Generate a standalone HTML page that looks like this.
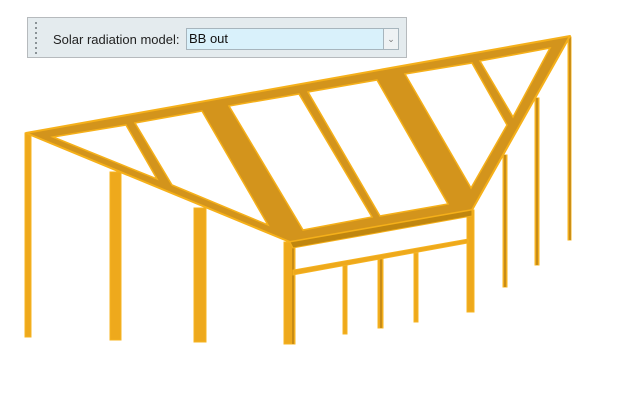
<!DOCTYPE html>
<html><head><meta charset="utf-8"><style>
html,body{margin:0;padding:0;background:#fff;width:639px;height:417px;overflow:hidden;font-family:"Liberation Sans",sans-serif}
.tb{position:absolute;left:27px;top:17px;width:380px;height:41px;background:#e4ebee;border:1px solid #b6babd;box-sizing:border-box}
.grip{position:absolute;left:7px;top:4px;width:2px;height:32px;background:repeating-linear-gradient(#8a9296 0 2px,transparent 2px 5px)}
.lbl{position:absolute;left:25px;top:14px;font-size:13px;color:#222}
.sel{position:absolute;left:158px;top:10px;width:198px;height:22px;background:#d9f1fb;border:1px solid #a7b5bd;box-sizing:border-box;font-size:13px;color:#111;padding:2px 0 0 2px}
.btn{position:absolute;left:355px;top:10px;width:16px;height:22px;border:1px solid #a7b5bd;box-sizing:border-box;background:#eef2f4;color:#777;font-size:9px;text-align:center;line-height:20px}
svg{position:absolute;left:0;top:0}
</style></head><body>
<svg width="639" height="417" viewBox="0 0 639 417">
<g fill="#eea91c" stroke="#f7b420" stroke-width="1">
<rect x="25" y="133" width="6" height="204"/>
<rect x="110" y="172" width="11" height="168"/>
<rect x="194" y="208" width="12" height="134"/>
<rect x="284" y="242" width="11" height="102"/>
<rect x="467" y="210" width="7" height="102"/>
<rect x="343" y="265" width="4" height="69"/>
<rect x="378" y="259" width="5" height="69"/>
<rect x="414" y="253" width="4" height="69"/>
<rect x="503" y="155" width="4" height="132"/>
<rect x="535" y="98" width="4" height="167"/>
<rect x="568" y="37" width="3" height="203"/>
</g>
<g stroke="#b07812" stroke-width="1.2">
<line x1="293" y1="244" x2="293" y2="344"/>
<line x1="381" y1="259" x2="381" y2="328"/>
<line x1="505" y1="155" x2="505" y2="287"/>
<line x1="537" y1="98" x2="537" y2="265"/>
<line x1="570" y1="37" x2="570" y2="240"/>
</g>
<polygon points="293,270 468,239 468,243 293,275" fill="#eea91c" stroke="#f7b420" stroke-width="0.8"/>
<polygon points="26,133 570,36 472,210 290,242" fill="#d3941c" stroke="#f5b01a" stroke-width="2" stroke-linejoin="round"/>
<polygon points="290,242 472,210 472,216 293,248" fill="#c0860f" stroke="#f5b01a" stroke-width="1"/>
<g fill="#fff" stroke="#f5b01a" stroke-width="1.5">
<polygon points="53,137 126,125 157,179"/>
<polygon points="135,123 202,111 268,225 172,185"/>
<polygon points="229,106 299,94 372,217 303,230"/>
<polygon points="308,92 377,80 448,204 380,216"/>
<polygon points="405,74 472,63 507,125 471,188"/>
<polygon points="480,61 550,48 513,117"/>
</g>
</svg>
<div class="tb"><div class="grip"></div><div class="lbl">Solar radiation model:</div><div class="sel">BB out</div><div class="btn">&#8964;</div></div>
</body></html>
